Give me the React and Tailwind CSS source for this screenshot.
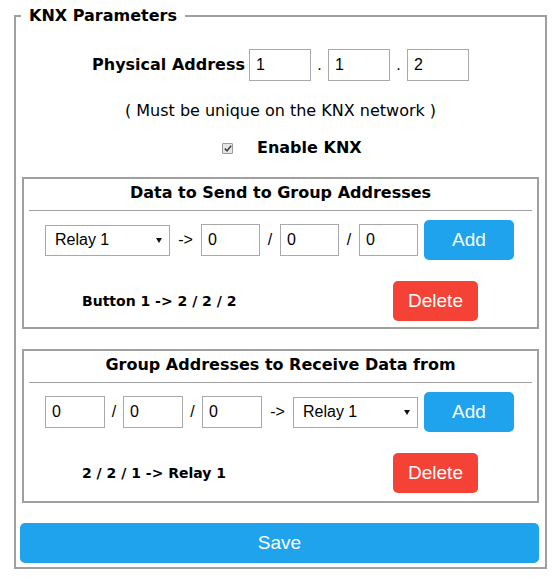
import React from "react";

const ui = { fontFamily: '"Liberation Sans", Arial, sans-serif' };

function Field({ value, w }) {
  return (
    <input
      readOnly
      value={value}
      style={ui}
      className={`${w} h-[32px] border border-[#a9a9a9] bg-white pl-[6px] text-[16px] text-black outline-none`}
    />
  );
}

function Select() {
  return (
    <div className="relative w-[125px] h-[31px]">
      <select
        style={ui}
        className="appearance-none w-full h-full border border-[#a9a9a9] bg-white pl-[9px] text-[16px] text-black outline-none"
        defaultValue="Relay 1"
      >
        <option>Relay 1</option>
        <option>Relay 2</option>
      </select>
      <svg className="absolute right-[8px] top-[13px] pointer-events-none" width="6" height="5" viewBox="0 0 6 5">
        <path d="M0 0 H6 L3 5 Z" fill="#111" />
      </svg>
    </div>
  );
}

function Sep({ children, w }) {
  return (
    <span style={ui} className={`${w} text-center text-[16px] text-black`}>
      {children}
    </span>
  );
}

function Btn({ children, color, w }) {
  return (
    <button
      style={ui}
      className={`${w} h-[40px] rounded-[5px] ${color} text-white text-[19px] leading-[40px]`}
    >
      {children}
    </button>
  );
}

function Box({ title, row, entry, pb }) {
  return (
    <div className={`border-2 border-[#a0a0a0] px-[5px] pt-[4px] ${pb}`}>
      <div className="text-center font-bold text-[16px] leading-[20px] text-black">{title}</div>
      <div className="mt-[7px] h-px bg-[#a0a0a0]" />
      <div className="mt-[9px] flex items-center pl-[16px] h-[40px]">{row}</div>
      <div className="mt-[21px] flex items-center h-[40px]">
        <span className="ml-[53px] font-bold text-[14px] text-black">{entry}</span>
        <div className="ml-auto mr-[54px]">
          <Btn color="bg-[#f44336]" w="w-[85px]">Delete</Btn>
        </div>
      </div>
    </div>
  );
}

export default function App() {
  return (
    <div
      className="w-[557px] h-[580px] bg-white pt-[6px]"
      style={{ fontFamily: '"DejaVu Sans", Verdana, sans-serif' }}
    >
      <fieldset className="ml-[14px] w-[532px] border-2 border-[#a0a0a0] px-[6px] pb-[4px]">
        <legend className="ml-[-1px] px-[8px] font-bold text-[16px] leading-[20px] text-black">
          KNX Parameters
        </legend>

        <div className="mt-[23px] flex items-center justify-center h-[32px]">
          <span className="font-bold text-[16px] text-black mr-[4px]">Physical Address</span>
          <Field value="1" w="w-[62px]" />
          <Sep w="w-[17px]">.</Sep>
          <Field value="1" w="w-[62px]" />
          <Sep w="w-[17px]">.</Sep>
          <Field value="2" w="w-[62px]" />
        </div>

        <div className="mt-[20px] text-center text-[16px] leading-[20px] text-black">
          ( Must be unique on the KNX network )
        </div>

        <div className="mt-[17px] flex items-center h-[20px] pl-[200px]">
          <span className="w-[11px] h-[11px] border border-[#9a9a9a] bg-[#e6e6e6] flex items-center justify-center rounded-[1px]">
            <svg width="8" height="7" viewBox="0 0 8 7">
              <path d="M0.8 3.6 L3 5.8 L7.2 0.8" stroke="#444" strokeWidth="1.6" fill="none" />
            </svg>
          </span>
          <span className="ml-[24px] font-bold text-[16px] text-black">Enable KNX</span>
        </div>

        <div className="mt-[19px]">
          <Box
            title="Data to Send to Group Addresses"
            entry="Button 1 -> 2 / 2 / 2"
            pb="pb-[6px]"
            row={
              <>
                <Select />
                <Sep w="w-[31px]">-&gt;</Sep>
                <Field value="0" w="w-[59px]" />
                <Sep w="w-[20px]">/</Sep>
                <Field value="0" w="w-[59px]" />
                <Sep w="w-[20px]">/</Sep>
                <Field value="0" w="w-[59px]" />
                <div className="ml-[6px]">
                  <Btn color="bg-[#1fa3ec]" w="w-[90px]">Add</Btn>
                </div>
              </>
            }
          />
        </div>

        <div className="mt-[20px]">
          <Box
            title="Group Addresses to Receive Data from"
            entry="2 / 2 / 1 -> Relay 1"
            pb="pb-[8px]"
            row={
              <>
                <Field value="0" w="w-[60px]" />
                <Sep w="w-[18px]">/</Sep>
                <Field value="0" w="w-[60px]" />
                <Sep w="w-[19px]">/</Sep>
                <Field value="0" w="w-[60px]" />
                <Sep w="w-[31px]">-&gt;</Sep>
                <Select />
                <div className="ml-[6px]">
                  <Btn color="bg-[#1fa3ec]" w="w-[90px]">Add</Btn>
                </div>
              </>
            }
          />
        </div>

        <div className="mt-[20px] ml-[-2px]">
          <Btn color="bg-[#1fa3ec]" w="w-[519px]">Save</Btn>
        </div>
      </fieldset>
    </div>
  );
}
